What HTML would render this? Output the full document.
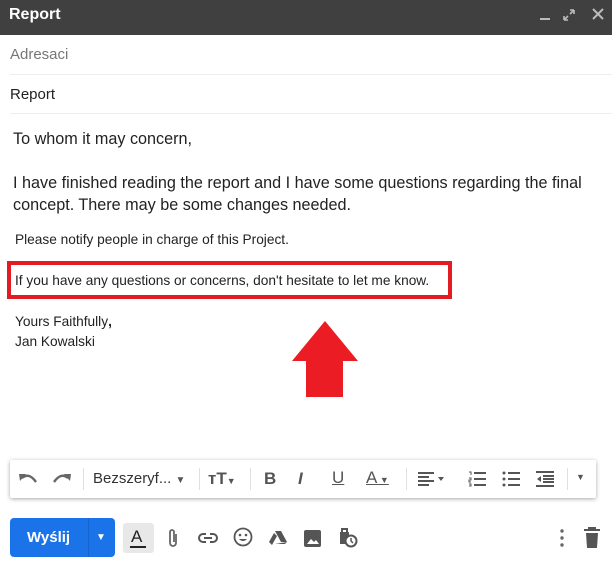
<!DOCTYPE html><html><head><style>
body{margin:0;width:612px;height:562px;background:#fff;font-family:"Liberation Sans",sans-serif;position:relative;overflow:hidden}
.a{position:absolute;white-space:nowrap}
.hdr{position:absolute;left:0;top:0;width:612px;height:35px;background:#404040}
.line{position:absolute;left:10px;width:602px;height:1px;background:#eceff1}
.tb{position:absolute;left:10px;top:460px;width:586px;height:38px;background:#fff;box-shadow:0 1px 4px rgba(0,0,0,.35);border-radius:2px}
.ic{position:absolute;color:#555;font-size:17px;font-weight:bold}
.sep{position:absolute;top:8px;width:1px;height:22px;background:#e0e0e0}
svg.s{position:absolute}
</style></head><body>
<div class="hdr"></div>
<div class="a" style="left:9px;top:6px;color:#fff;font-size:16px;font-weight:bold">Report</div>
<div class="a" style="left:540px;top:18px;width:10px;height:2px;background:#bbb"></div>
<svg class="s" style="left:562px;top:8px" width="14" height="14"><path d="M2 12L6 8M2 12V8M2 12H6M12 2L8 6M12 2V6M12 2H8" stroke="#bbb" stroke-width="1.6" fill="none"/></svg>
<svg class="s" style="left:592px;top:8px" width="12" height="12"><path d="M1 1L11 11M11 1L1 11" stroke="#bbb" stroke-width="2"/></svg>
<div class="a" style="left:10px;top:46px;color:#777;font-size:15px">Adresaci</div>
<div class="line" style="top:74px"></div>
<div class="a" style="left:10px;top:86px;color:#222;font-size:15px">Report</div>
<div class="line" style="top:113px"></div>
<div class="a" style="left:13px;top:130px;color:#222;font-size:16.2px">To whom it may concern,</div>
<div class="a" style="left:13px;top:174px;color:#222;font-size:16.2px">I have finished reading the report and I have some questions regarding the final</div>
<div class="a" style="left:13px;top:196px;color:#222;font-size:16.2px">concept. There may be some changes needed.</div>
<div class="a" style="left:15px;top:232px;color:#222;font-size:13.7px">Please notify people in charge of this Project.</div>
<div class="a" style="left:7px;top:261px;width:437px;height:30px;border:4px solid #e31b23"></div>
<div class="a" style="left:15px;top:273px;color:#222;font-size:13.7px">If you have any questions or concerns, don't hesitate to let me know.</div>
<div class="a" style="left:15px;top:314px;color:#222;font-size:13.7px">Yours Faithfully<b>,</b></div>
<div class="a" style="left:15px;top:334px;color:#222;font-size:13.7px">Jan Kowalski</div>
<svg class="s" style="left:0;top:0" width="612" height="420"><polygon points="325,321 358,361 343,361 343,397 306,397 306,361 292,361" fill="#ec1c24"/></svg>
<div class="tb">
<svg class="s" style="left:8px;top:10px" width="20" height="18"><path d="M4 8Q11 2 18 12" stroke="#666" stroke-width="2.4" fill="none"/><path d="M1 4L8 4L2 11Z" fill="#666"/></svg>
<svg class="s" style="left:42px;top:10px" width="20" height="18"><path d="M16 8Q9 2 2 12" stroke="#666" stroke-width="2.4" fill="none"/><path d="M19 4L12 4L18 11Z" fill="#666"/></svg>
<div class="sep" style="left:73px"></div>
<div class="a" style="left:83px;top:10px;color:#333;font-size:15px">Bezszeryf... <span style="font-size:10px;color:#555">▼</span></div>
<div class="sep" style="left:189px"></div>
<div class="ic" style="left:198px;top:9px">ᴛT<span style="font-size:9px">▼</span></div>
<div class="sep" style="left:240px"></div>
<div class="ic" style="left:254px;top:9px">B</div>
<div class="ic" style="left:288px;top:9px;font-style:italic">I</div>
<div class="ic" style="left:322px;top:8px;font-weight:normal;text-decoration:underline">U</div>
<div class="ic" style="left:356px;top:8px;font-weight:normal;text-decoration:underline">A<span style="font-size:9px;text-decoration:none"> ▼</span></div>
<div class="sep" style="left:396px"></div>
<svg class="s" style="left:408px;top:12px" width="28" height="14"><path d="M0 1H16M0 5H11M0 9H16M0 13H11" stroke="#555" stroke-width="2"/><path d="M20 5L26 5L23 9Z" fill="#555"/></svg>
<svg class="s" style="left:458px;top:11px" width="18" height="16"><path d="M6 2H18M6 8H18M6 14H18" stroke="#555" stroke-width="2"/><path d="M1 1H3V4M1 7H3V9H1V11H3M1 13H3V15H1" stroke="#555" stroke-width="1" fill="none"/></svg>
<svg class="s" style="left:492px;top:11px" width="18" height="16"><path d="M6 2H18M6 8H18M6 14H18" stroke="#555" stroke-width="2"/><circle cx="2" cy="2" r="1.5" fill="#555"/><circle cx="2" cy="8" r="1.5" fill="#555"/><circle cx="2" cy="14" r="1.5" fill="#555"/></svg>
<svg class="s" style="left:526px;top:11px" width="18" height="16"><path d="M0 1H18M7 5H18M7 8H18M7 11H18M0 15H18" stroke="#555" stroke-width="2"/><path d="M5 5L1 8L5 11Z" fill="#555"/></svg>
<div class="sep" style="left:557px"></div>
<div class="ic" style="left:566px;top:12px;font-size:9px">▼</div>
</div>
<div class="a" style="left:10px;top:518px;width:105px;height:39px;background:#1a73e8;border-radius:4px"></div>
<div class="a" style="left:88px;top:518px;width:1px;height:39px;background:#1765cc"></div>
<div class="a" style="left:27px;top:529px;color:#fff;font-size:15px;font-weight:bold">Wyślij</div>
<div class="a" style="left:96px;top:532px;color:#fff;font-size:10px">▼</div>
<div class="a" style="left:123px;top:523px;width:31px;height:30px;background:#e8e8e8;border-radius:3px"></div>
<div class="a" style="left:131px;top:527px;color:#222;font-size:17px">A</div>
<div class="a" style="left:130px;top:546px;width:16px;height:2px;background:#222"></div>
<svg class="s" style="left:167px;top:528px" width="12" height="20"><path d="M9 6V15A3 3 0 0 1 3 15V4A2 2 0 0 1 7 4V14" stroke="#666" stroke-width="1.8" fill="none"/></svg>
<svg class="s" style="left:198px;top:532px" width="20" height="12"><path d="M8 2H5A4 4 0 0 0 5 10H8M12 2H15A4 4 0 0 1 15 10H12M6 6H14" stroke="#555" stroke-width="2" fill="none"/></svg>
<svg class="s" style="left:233px;top:527px" width="20" height="20"><circle cx="10" cy="10" r="8.5" stroke="#555" stroke-width="1.8" fill="none"/><circle cx="7" cy="8" r="1.3" fill="#555"/><circle cx="13" cy="8" r="1.3" fill="#555"/><path d="M6 12Q10 16 14 12Z" fill="#555"/></svg>
<svg class="s" style="left:268px;top:530px" width="20" height="16"><path d="M7 1H13L19 12H13ZM6 3L1 12L4 15L9 6ZM7 14H17L19 12" fill="#555"/></svg>
<svg class="s" style="left:304px;top:530px" width="17" height="17"><rect width="17" height="17" rx="2" fill="#555"/><path d="M3 14L7 9L10 12L12 10L15 14Z" fill="#fff"/></svg>
<svg class="s" style="left:336px;top:526px" width="22" height="22"><path d="M4 6H13V10A6 6 0 0 0 10 18H4Z" fill="#555"/><path d="M6 6V3H11V6" stroke="#555" stroke-width="2" fill="none"/><circle cx="15" cy="15" r="5.5" stroke="#555" stroke-width="2" fill="#fff"/><path d="M15 12V15L17 17" stroke="#555" stroke-width="1.5" fill="none"/></svg>
<svg class="s" style="left:559px;top:528px" width="6" height="20"><circle cx="3" cy="3" r="1.7" fill="#666"/><circle cx="3" cy="10" r="1.7" fill="#666"/><circle cx="3" cy="17" r="1.7" fill="#666"/></svg>
<svg class="s" style="left:583px;top:527px" width="18" height="22"><path d="M1 3H17M6 3V1H12V3" stroke="#555" stroke-width="2"/><path d="M3 6H15L14 21H4Z" fill="#555"/></svg>
</body></html>
